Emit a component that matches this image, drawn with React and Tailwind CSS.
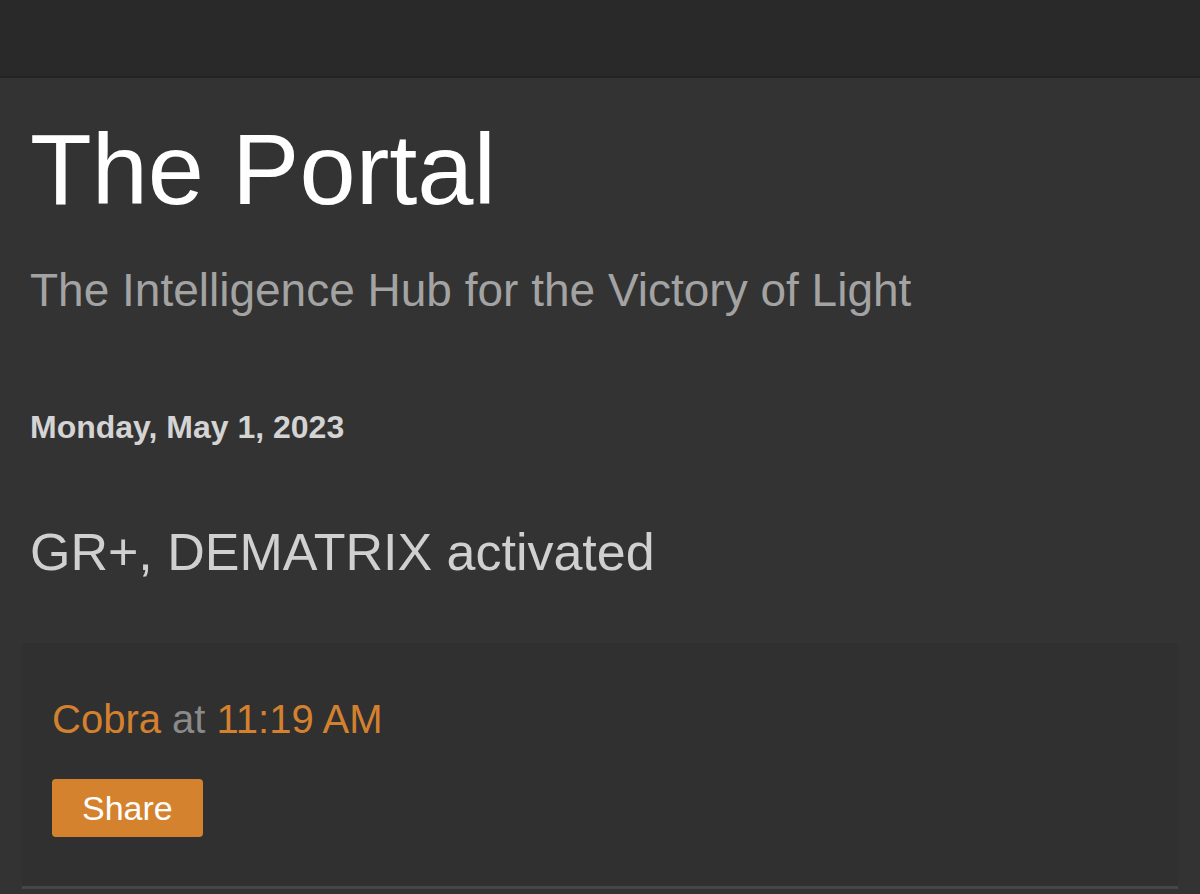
export default function App() {
  return (
    <main className="min-h-[894px] bg-[#333333] font-['Liberation_Sans',Arial,sans-serif]">
      {/* Top bar */}
      <div className="h-[78px] bg-[#292929] border-b-2 border-[#232323]"></div>

      <div className="px-[30px]">
        {/* Header */}
        <header>
          <h1 className="mt-[41px] text-[101px] leading-none font-normal text-white">
            The Portal
          </h1>
          <p className="mt-[47px] text-[46px] leading-none text-[#a3a3a3]">
            The Intelligence Hub for the Victory of Light
          </p>
        </header>

        {/* Post */}
        <h2 className="mt-[98px] text-[32px] leading-none font-bold text-[#d4d4d4]">
          Monday, May 1, 2023
        </h2>
        <h3 className="mt-[83px] text-[52px] leading-none font-normal text-[#d0d0d0]">
          GR+, DEMATRIX activated
        </h3>
      </div>

      <div className="mx-[22px] mt-[65px] bg-[#303030] border-b-[3px] border-[#464646] px-[30px] pt-[56px] pb-[49px]">
        <div className="text-[40px] leading-none">
          <span className="text-[#d4812f]">Cobra</span>
          <span className="text-[#8a8a8a]"> at </span>
          <span className="text-[#d4812f]">11:19 AM</span>
        </div>
        <button className="mt-[40px] h-[58px] px-[30px] rounded-[4px] bg-[#d5822f] text-white text-[34px] leading-none">
          Share
        </button>
      </div>
    </main>
  );
}
